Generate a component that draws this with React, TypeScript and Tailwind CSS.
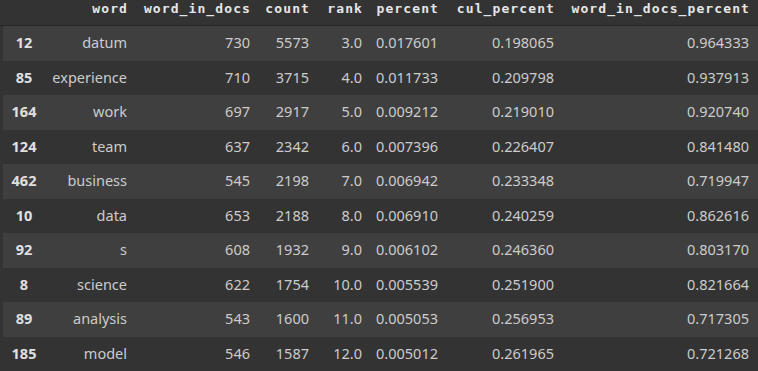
const columns = [
  "word",
  "word_in_docs",
  "count",
  "rank",
  "percent",
  "cul_percent",
  "word_in_docs_percent",
];

const rows: [string, string, string, string, string, string, string, string][] = [
  ["12", "datum", "730", "5573", "3.0", "0.017601", "0.198065", "0.964333"],
  ["85", "experience", "710", "3715", "4.0", "0.011733", "0.209798", "0.937913"],
  ["164", "work", "697", "2917", "5.0", "0.009212", "0.219010", "0.920740"],
  ["124", "team", "637", "2342", "6.0", "0.007396", "0.226407", "0.841480"],
  ["462", "business", "545", "2198", "7.0", "0.006942", "0.233348", "0.719947"],
  ["10", "data", "653", "2188", "8.0", "0.006910", "0.240259", "0.862616"],
  ["92", "s", "608", "1932", "9.0", "0.006102", "0.246360", "0.803170"],
  ["8", "science", "622", "1754", "10.0", "0.005539", "0.251900", "0.821664"],
  ["89", "analysis", "543", "1600", "11.0", "0.005053", "0.256953", "0.717305"],
  ["185", "model", "546", "1587", "12.0", "0.005012", "0.261965", "0.721268"],
];

const bodyCols = "grid-cols-[42px_90px_123px_59px_53px_76px_116px_195px]";
const headCols = "grid-cols-[45px_90px_123px_59px_53px_76px_116px_195px]";

export default function App() {
  return (
    <div className="h-[371px] w-[758px] overflow-hidden bg-[#333333] text-[#cccccc]">
      <div
        className={`grid h-[26px] border-b border-[#262626] ${headCols} font-['DejaVu_Sans_Mono',monospace] text-[13px] font-bold leading-[18px] tracking-[1.1px] text-[#e6e6e6]`}
      >
        <div />
        {columns.map((c) => (
          <div key={c} className="pr-[7px] text-right whitespace-nowrap">
            {c}
          </div>
        ))}
      </div>

      <div className="ml-[3px] font-['Noto_Sans',sans-serif] text-[14.5px]">
        {rows.map((r, i) => (
          <div
            key={r[0]}
            className={`grid h-[34.5px] items-center ${bodyCols} ${
              i % 2 === 0 ? "bg-[#3f3f3f]" : ""
            }`}
          >
            <div className="text-center font-bold text-[#e0e0e0]">{r[0]}</div>
            {r.slice(1).map((v, j) => (
              <div key={j} className="pr-[8px] text-right whitespace-nowrap">
                {v}
              </div>
            ))}
          </div>
        ))}
      </div>
    </div>
  );
}
